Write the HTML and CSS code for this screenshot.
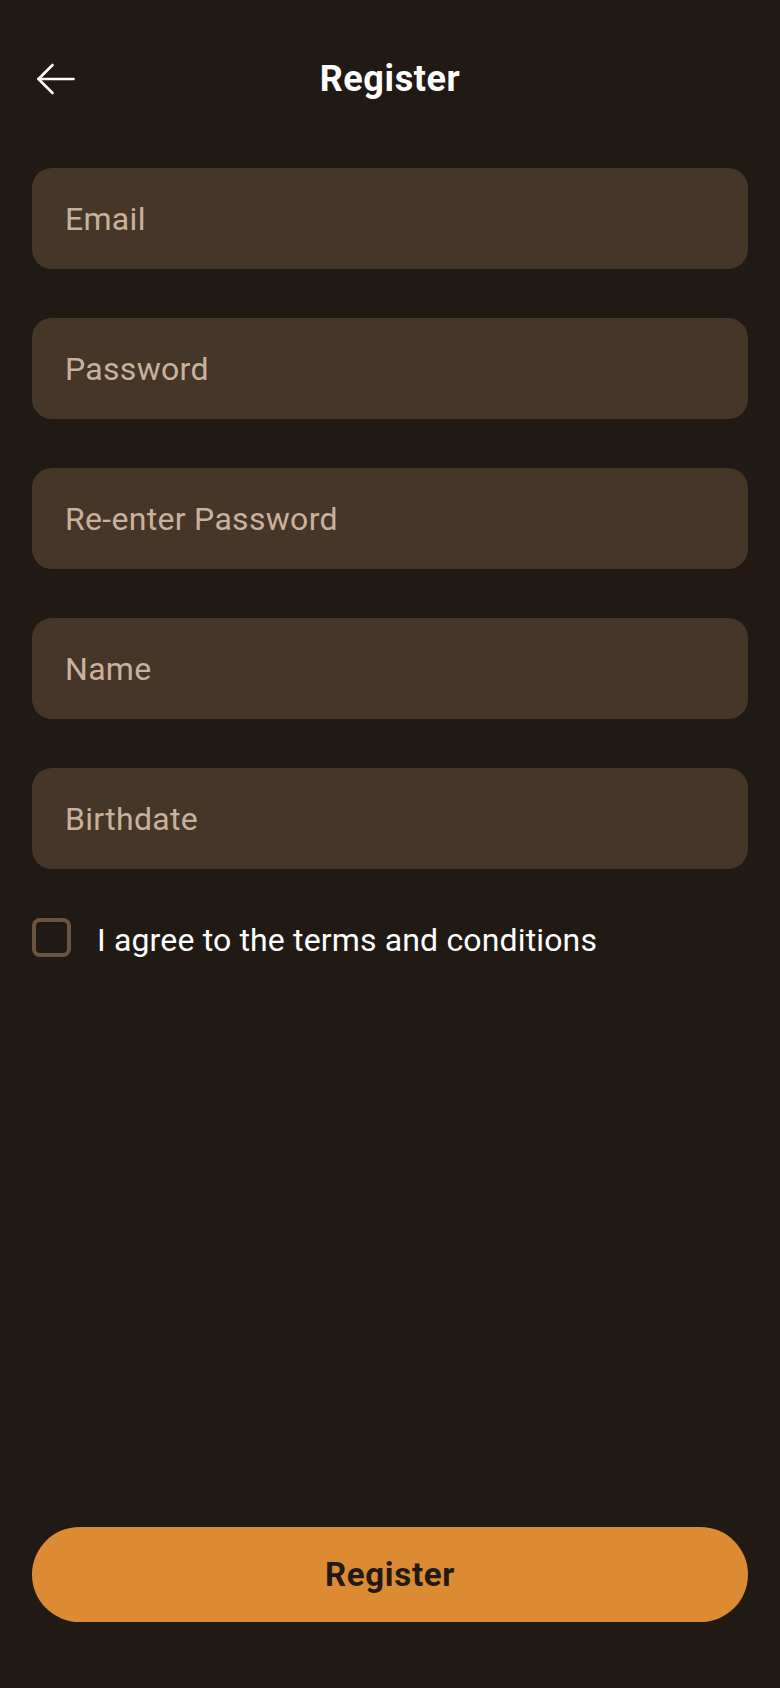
FILE: index.html
```html
<!DOCTYPE html>
<html lang="en">
<head>
<meta charset="utf-8">
<title>Register</title>
<link rel="stylesheet" href="styles.css">
</head>
<body>
<div class="screen">
  <header class="header">
    <button class="back" aria-label="Back">
      <svg width="48" height="48" viewBox="0 0 48 48" fill="none" stroke="#ffffff" stroke-width="2.6" stroke-linecap="round" stroke-linejoin="round">
        <path d="M41.5 24H6.5"/>
        <path d="M20.5 10L6.5 24L20.5 38"/>
      </svg>
    </button>
    <h1 class="title">Register</h1>
    <span class="spacer"></span>
  </header>
  <form class="form">
    <input class="field" type="email" placeholder="Email">
    <input class="field" type="password" placeholder="Password">
    <input class="field" type="password" placeholder="Re-enter Password">
    <input class="field" type="text" placeholder="Name">
    <input class="field" type="text" placeholder="Birthdate">
    <label class="agree">
      <span class="box"></span>
      <span class="agree-text">I agree to the terms and conditions</span>
    </label>
  </form>
  <div class="footer">
    <button class="submit">Register</button>
  </div>
</div>
</body>
</html>
```
FILE: styles.css
```css
* { box-sizing: border-box; }
html, body {
  margin: 0;
  padding: 0;
  background: #211a14;
}
body {
  font-family: Roboto, "Liberation Sans", sans-serif;
  color: #ffffff;
}
.screen {
  width: 780px;
  min-height: 1688px;
  display: flex;
  flex-direction: column;
}
.header {
  display: flex;
  align-items: center;
  justify-content: space-between;
  padding: 55px 32px 0;
  height: 103px;
}
.back {
  width: 48px;
  height: 48px;
  padding: 0;
  border: 0;
  background: none;
  display: flex;
  align-items: center;
  justify-content: center;
}
.spacer { width: 48px; height: 48px; }
.title {
  margin: 0;
  font-size: 36px;
  font-weight: 700;
  letter-spacing: 0.6px;
  line-height: 48px;
  color: #ffffff;
}
.form {
  display: flex;
  flex-direction: column;
  gap: 49px;
  padding: 65px 32px 0;
  margin: 0;
}
.field {
  display: block;
  width: 100%;
  height: 101px;
  border: 0;
  border-radius: 20px;
  background: #463628;
  padding: 0 0 0 33px;
  font-family: Roboto, "Liberation Sans", sans-serif;
  font-size: 32px;
  letter-spacing: 0.3px;
  color: #ffffff;
  outline: none;
}
.field::placeholder {
  color: #c8b29c;
  opacity: 1;
}
.agree {
  display: flex;
  align-items: center;
  gap: 26px;
  height: 39px;
}
.box {
  width: 39px;
  height: 39px;
  border: 4px solid #6b5540;
  border-radius: 8px;
  flex: none;
}
.agree-text {
  font-size: 32px;
  letter-spacing: 0.15px;
  padding-top: 4px;
  color: #ffffff;
}
.footer {
  margin-top: auto;
  padding: 0 32px 66px;
}
.submit {
  display: block;
  width: 100%;
  height: 95px;
  border: 0;
  border-radius: 48px;
  background: #dd8b33;
  color: #211a14;
  font-family: Roboto, "Liberation Sans", sans-serif;
  font-size: 33px;
  font-weight: 700;
  letter-spacing: 0.7px;
}
```
